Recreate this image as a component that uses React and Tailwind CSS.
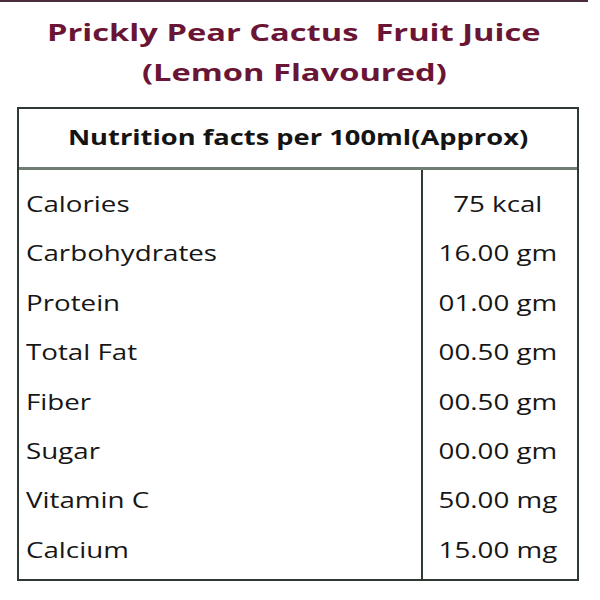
import React from "react";

const rows = [
  ["Calories", "75 kcal"],
  ["Carbohydrates", "16.00 gm"],
  ["Protein", "01.00 gm"],
  ["Total Fat", "00.50 gm"],
  ["Fiber", "00.50 gm"],
  ["Sugar", "00.00 gm"],
  ["Vitamin C", "50.00 mg"],
  ["Calcium", "15.00 mg"],
];

export default function App() {
  return (
    <div className="w-[600px] h-[600px] bg-white overflow-hidden font-['Open_Sans',sans-serif]">
      <div className="h-[2px] w-[588px] bg-[#4a2c3c]" />
      <div className="w-[588px] pt-[10px] text-center text-[#6a1535] font-bold text-[23px] leading-[40px]">
        <div>
          <span className="inline-block scale-x-[1.42] origin-center whitespace-pre">Prickly Pear Cactus  Fruit Juice</span>
        </div>
        <div>
          <span className="inline-block scale-x-[1.42] origin-center">(Lemon Flavoured)</span>
        </div>
      </div>
      <div className="ml-[17px] mt-[15px] w-[562px] border-2 border-[#2f3a32]">
        <div className="h-[61px] flex items-center justify-center border-b-[3px] border-[#6f7d72] text-[21px] font-bold text-[#141414]">
          <span className="inline-block scale-x-[1.3] origin-center">Nutrition facts per 100ml(Approx)</span>
        </div>
        <div className="flex">
          <div className="w-[404px] border-r-2 border-[#2f3a32] pt-[10px] pb-[4px]">
            {rows.map(([k]) => (
              <div key={k} className="h-[49.4px] flex items-center pl-[7px] text-[21px] text-[#161616]">
                <span className="inline-block scale-x-[1.32] origin-left">{k}</span>
              </div>
            ))}
          </div>
          <div className="flex-1 pt-[10px] pb-[4px] pr-[5px]">
            {rows.map(([k, v]) => (
              <div key={k} className="h-[49.4px] flex items-center justify-center text-[21px] text-[#161616]">
                <span className="inline-block scale-x-[1.32] origin-center">{v}</span>
              </div>
            ))}
          </div>
        </div>
      </div>
    </div>
  );
}
